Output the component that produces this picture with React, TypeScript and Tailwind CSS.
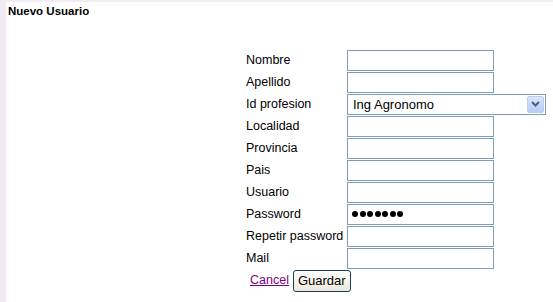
import React from 'react';

const fields = [
    { label: 'Nombre', kind: 'text' },
    { label: 'Apellido', kind: 'text' },
    { label: 'Id profesion', kind: 'select' },
    { label: 'Localidad', kind: 'text' },
    { label: 'Provincia', kind: 'text' },
    { label: 'Pais', kind: 'text' },
    { label: 'Usuario', kind: 'text' },
    { label: 'Password', kind: 'password' },
    { label: 'Repetir password', kind: 'text' },
    { label: 'Mail', kind: 'text' },
];

function SelectBox() {
    return (
        <div className="flex items-center w-[199px] h-[21px] border border-[#7f9db9] bg-white pl-[5px] pr-[1px]">
            <span className="flex-1 text-[13px] text-black leading-none">Ing Agronomo</span>
            {/* XP style drop arrow */}
            <span className="flex items-center justify-center w-[17px] h-[17px] rounded-[2px] border border-[#b9cdf6] bg-gradient-to-b from-[#dce6fc] to-[#b7cbf5]">
                <svg width="9" height="6" viewBox="0 0 9 6">
                    <path d="M1 1 L4.5 4.5 L8 1" fill="none" stroke="#4d6185" strokeWidth="2" />
                </svg>
            </span>
        </div>
    );
}

function PasswordBox() {
    return (
        <div className="flex items-center gap-[1.5px] w-[147px] h-[21px] border border-[#7f9db9] bg-white pl-[4px]">
            {Array.from({ length: 7 }).map((_, i) => (
                <span key={i} className="w-[6px] h-[6px] rounded-full bg-black" />
            ))}
        </div>
    );
}

export default function App() {
    return (
        <div className="h-[302px] w-[553px] bg-[#f1ecf3] pl-[6px] pt-[2px] font-['Liberation_Sans',Arial,sans-serif]">
            <div className="h-full bg-white">
                <h1 className="pl-[2px] pt-[2px] text-[11.5px] font-bold leading-[14px] text-black">Nuevo Usuario</h1>

                {/* Formulario */}
                <div className="ml-[240px] mt-[31px] flex flex-col">
                    {fields.map((f) => (
                        <div key={f.label} className="flex items-center h-[22px]">
                            <label className="w-[101px] text-[12.5px] text-black">{f.label}</label>
                            {f.kind === 'select' && <SelectBox />}
                            {f.kind === 'password' && <PasswordBox />}
                            {f.kind === 'text' && (
                                <input type="text" className="w-[147px] h-[21px] border border-[#7f9db9] bg-white outline-none" />
                            )}
                        </div>
                    ))}
                    <div className="flex items-center h-[23px] pl-[4px] gap-[4px]">
                        <a href="#" className="text-[12.5px] text-[#800080] underline">Cancel</a>
                        <button className="h-[22px] px-[4px] rounded-[3px] border border-[#1c3c5c] bg-gradient-to-b from-white to-[#ece9d8] text-[13px] text-black">
                            Guardar
                        </button>
                    </div>
                </div>
            </div>
        </div>
    );
}
